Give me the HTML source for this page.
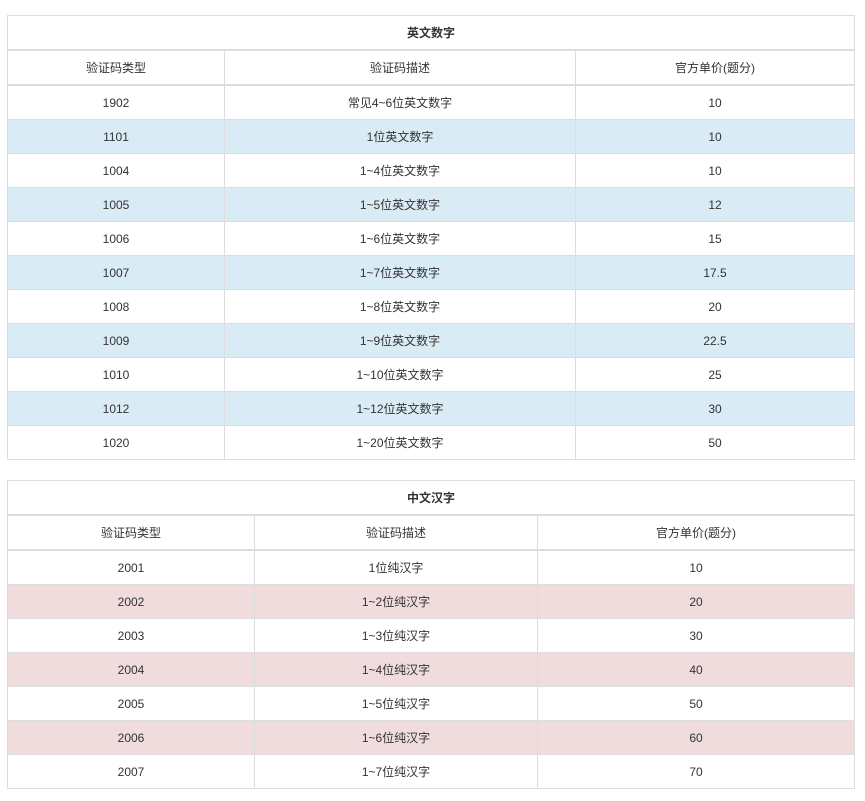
<!DOCTYPE html>
<html><head><meta charset="utf-8"><style>
body{margin:0;background:#fff;font-family:"Liberation Sans","Noto Sans CJK SC",sans-serif;font-size:12px;color:#333;}
.t{position:absolute;left:7px;width:846px;border:1px solid #ddd;border-bottom:none;}
.r{display:flex;height:33px;border-bottom:1px solid #ddd;}
.r.h{border-bottom:2px solid #ddd;height:33px;}
.r div{display:flex;align-items:center;justify-content:center;border-left:1px solid #ddd;box-sizing:border-box;}
.r div:first-child{border-left:none;}
.title{font-weight:bold;flex:1;}
.b{background:#d9ebf5;}
.p{background:#f0dcdd;}
</style></head><body>
<div class="t" style="top:15px">
<div class="r h"><div class="title">英文数字</div></div>
<div class="r h"><div style="width:216px">验证码类型</div><div style="width:351px">验证码描述</div><div style="flex:1">官方单价(题分)</div></div>
<div class="r"><div style="width:216px">1902</div><div style="width:351px">常见4~6位英文数字</div><div style="flex:1">10</div></div>
<div class="r b"><div style="width:216px">1101</div><div style="width:351px">1位英文数字</div><div style="flex:1">10</div></div>
<div class="r"><div style="width:216px">1004</div><div style="width:351px">1~4位英文数字</div><div style="flex:1">10</div></div>
<div class="r b"><div style="width:216px">1005</div><div style="width:351px">1~5位英文数字</div><div style="flex:1">12</div></div>
<div class="r"><div style="width:216px">1006</div><div style="width:351px">1~6位英文数字</div><div style="flex:1">15</div></div>
<div class="r b"><div style="width:216px">1007</div><div style="width:351px">1~7位英文数字</div><div style="flex:1">17.5</div></div>
<div class="r"><div style="width:216px">1008</div><div style="width:351px">1~8位英文数字</div><div style="flex:1">20</div></div>
<div class="r b"><div style="width:216px">1009</div><div style="width:351px">1~9位英文数字</div><div style="flex:1">22.5</div></div>
<div class="r"><div style="width:216px">1010</div><div style="width:351px">1~10位英文数字</div><div style="flex:1">25</div></div>
<div class="r b"><div style="width:216px">1012</div><div style="width:351px">1~12位英文数字</div><div style="flex:1">30</div></div>
<div class="r"><div style="width:216px">1020</div><div style="width:351px">1~20位英文数字</div><div style="flex:1">50</div></div>
</div>
<div class="t" style="top:480px">
<div class="r h"><div class="title">中文汉字</div></div>
<div class="r h"><div style="width:246px">验证码类型</div><div style="width:283px">验证码描述</div><div style="flex:1">官方单价(题分)</div></div>
<div class="r"><div style="width:246px">2001</div><div style="width:283px">1位纯汉字</div><div style="flex:1">10</div></div>
<div class="r p"><div style="width:246px">2002</div><div style="width:283px">1~2位纯汉字</div><div style="flex:1">20</div></div>
<div class="r"><div style="width:246px">2003</div><div style="width:283px">1~3位纯汉字</div><div style="flex:1">30</div></div>
<div class="r p"><div style="width:246px">2004</div><div style="width:283px">1~4位纯汉字</div><div style="flex:1">40</div></div>
<div class="r"><div style="width:246px">2005</div><div style="width:283px">1~5位纯汉字</div><div style="flex:1">50</div></div>
<div class="r p"><div style="width:246px">2006</div><div style="width:283px">1~6位纯汉字</div><div style="flex:1">60</div></div>
<div class="r"><div style="width:246px">2007</div><div style="width:283px">1~7位纯汉字</div><div style="flex:1">70</div></div>
</div>
</body></html>
